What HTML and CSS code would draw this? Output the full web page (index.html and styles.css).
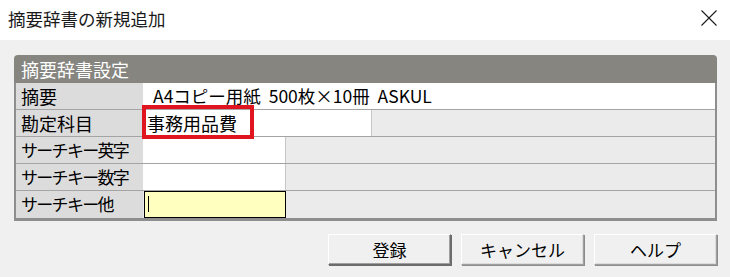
FILE: index.html
```html
<!DOCTYPE html>
<html lang="ja">
<head>
  <meta charset="UTF-8" />
  <title>摘要辞書の新規追加</title>
  <link rel="stylesheet" href="styles.css">
</head>
<body>
  <header class="titlebar">
    <span class="title">摘要辞書の新規追加</span>
    <svg class="close" width="16" height="16" viewBox="0 0 16 16">
      <path d="M0.5 0.5 L15.5 15.5 M15.5 0.5 L0.5 15.5" stroke="#1a1a1a" stroke-width="1.1" fill="none" />
    </svg>
  </header>

  <div class="dialog">
    <div class="panel">
      <div class="panel-head">摘要辞書設定</div>
      <div class="panel-body">
        <div class="row">
          <div class="label">摘要</div>
          <div class="value wide">A4コピー用紙&nbsp;&nbsp;500枚×10冊&nbsp;&nbsp;ASKUL</div>
        </div>
        <div class="row">
          <div class="label">勘定科目</div>
          <div class="value account">
            事務用品費
            <span class="highlight"></span>
          </div>
          <div class="rest"></div>
        </div>
        <div class="row">
          <div class="label kana">サーチキー英字</div>
          <div class="value"></div>
          <div class="rest"></div>
        </div>
        <div class="row">
          <div class="label kana">サーチキー数字</div>
          <div class="value"></div>
          <div class="rest"></div>
        </div>
        <div class="row last">
          <div class="label kana">サーチキー他</div>
          <div class="value input"><span class="caret"></span></div>
          <div class="rest"></div>
        </div>
      </div>
    </div>

    <div class="actions">
      <button type="button" class="btn default">登録</button>
      <button type="button" class="btn">キャンセル</button>
      <button type="button" class="btn">ヘルプ</button>
    </div>
  </div>
</body>
</html>
```

FILE: styles.css
```css
body {
  margin: 0;
  padding: 0;
  width: 730px;
  height: 277px;
  overflow: hidden;
  background-color: #f0f0f0;
  font-family: "Noto Sans CJK JP", "Liberation Sans", sans-serif;
  color: #000;
}

.titlebar {
  height: 40px;
  background-color: #fff;
  display: flex;
  justify-content: space-between;
  align-items: center;
  padding: 0 13px 0 8px;
}
.titlebar .title {
  font-size: 17.5px;
  line-height: 20px;
  color: #1a1a1a;
  margin-top: -3px;
}
.titlebar .close {
  margin-top: -4px;
}

.dialog {
  padding: 15px 13px 0 14px;
}

.panel {
  width: 703px;
}
.panel-head {
  height: 28px;
  background-color: #868580;
  color: #fff;
  border-radius: 4px 4px 0 0;
  font-size: 18px;
  line-height: 28px;
  padding-left: 7px;
}
.panel-body {
  border: 2px solid #8e8e8e;
  border-top: none;
  border-bottom-width: 3px;
  background-color: #ecebeb;
}

.row {
  display: flex;
  height: 27px;
  box-sizing: border-box;
  border-bottom: 1px solid #a4a4a4;
}
.row.last {
  border-bottom: none;
}

.label {
  width: 127px;
  flex-shrink: 0;
  background-color: #dddcdc;
  font-size: 18px;
  line-height: 26px;
  padding-left: 5px;
  box-sizing: border-box;
  white-space: nowrap;
  overflow: hidden;
}
.label.kana {
  font-size: 17px;
  letter-spacing: -1.7px;
}

.value {
  width: 143px;
  flex-shrink: 0;
  background-color: #fff;
  font-size: 17px;
  line-height: 26px;
  box-sizing: border-box;
  border-right: 1px solid #c6c6c6;
  white-space: nowrap;
}
.value.wide {
  flex: 1;
  border-right: none;
  padding-left: 10px;
  font-size: 17.5px;
}
.value.account {
  width: 229px;
  position: relative;
  padding-left: 4px;
  font-size: 18px;
}
.highlight {
  position: absolute;
  left: -1px;
  top: -5px;
  width: 112px;
  height: 34px;
  box-sizing: border-box;
  border: 4px solid #e0151f;
}

.value.input {
  margin-left: 1px;
  width: 142px;
  background-color: #ffffc0;
  border: 1px solid #000;
  position: relative;
}
.caret {
  position: absolute;
  left: 3px;
  top: 4px;
  width: 1px;
  height: 16px;
  background-color: #000;
}

.rest {
  flex: 1;
}

.actions {
  display: flex;
  justify-content: flex-end;
  gap: 10px;
  margin-top: 13px;
  width: 703px;
}

.btn {
  width: 123px;
  height: 31px;
  background-color: #f0f0f0;
  border: 1px solid #a0a0a0;
  border-top-color: #fff;
  border-left-color: #fff;
  box-shadow: 1px 1px 0 #8c8c8c, inset -1px -1px 0 #dcdcdc;
  font-family: "Noto Sans CJK JP", "Liberation Sans", sans-serif;
  font-size: 17px;
  line-height: 27px;
  padding: 0;
  color: #000;
}
.btn.default {
  border: 1px solid #6c6c6c;
  border-top-color: #fff;
  border-left-color: #fff;
  box-shadow: 1px 1px 0 #6c6c6c, inset -1px -1px 0 #a0a0a0;
}
```
